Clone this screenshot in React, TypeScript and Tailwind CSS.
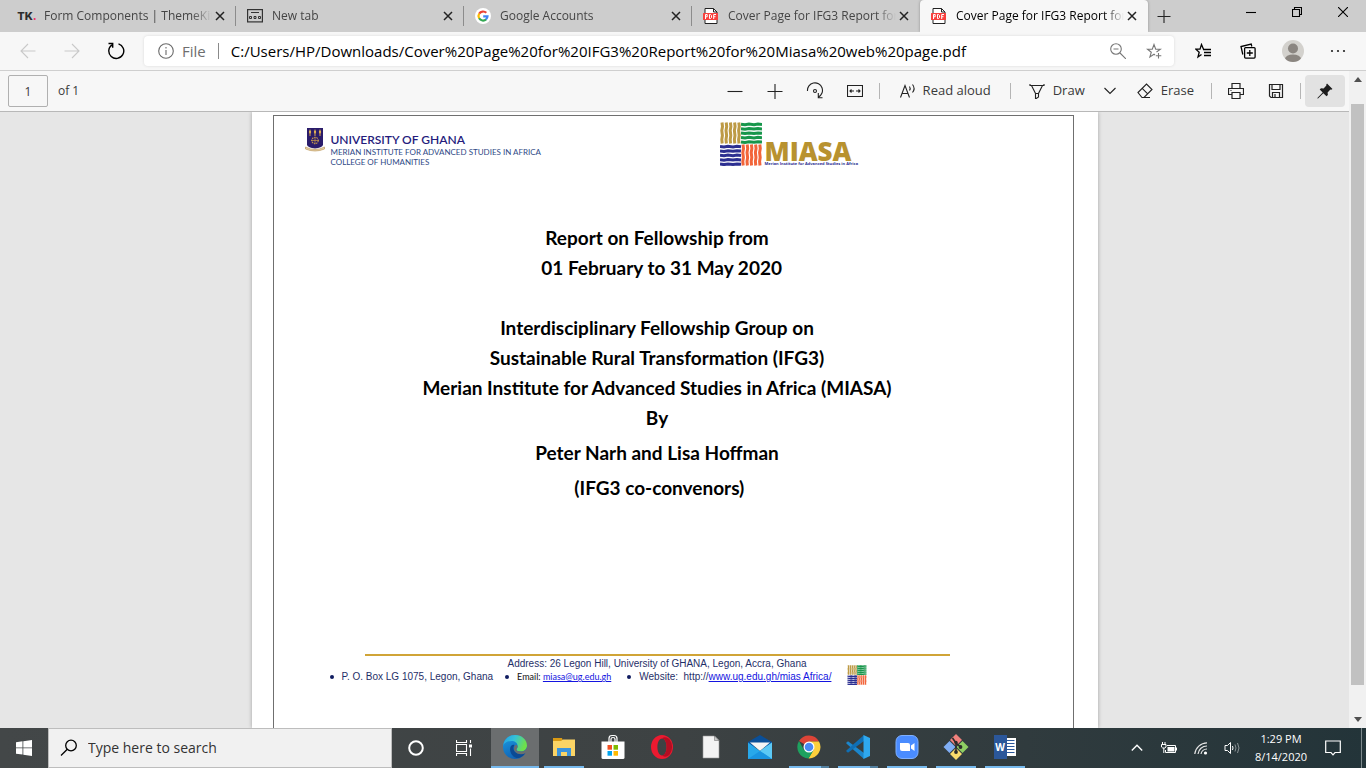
import type { ReactNode } from "react";

const UI = "font-['Open_Sans','Noto_Sans',sans-serif]";

function Stroke({ size = 16, className = "", children }: { size?: number; className?: string; children: ReactNode }) {
  return (
    <svg
      width={size}
      height={size}
      viewBox={`0 0 ${size} ${size}`}
      fill="none"
      stroke="currentColor"
      strokeWidth="1.1"
      className={`shrink-0 ${className}`}
      aria-hidden="true"
    >
      {children}
    </svg>
  );
}

/* ---------- tab strip ---------- */

function PdfIcon() {
  return (
    <svg width="16" height="16" viewBox="0 0 16 16" aria-hidden="true" className="shrink-0">
      <path d="M2 .5h8.500L14 4v11.500H2z" fill="#fff" stroke="#222" />
      <path d="M10.500.5V4H14" fill="none" stroke="#222" />
      <rect x="0" y="5" width="15" height="7" rx=".5" fill="#f8403d" />
      <g fill="none" stroke="#fff" strokeWidth="1">
        <path d="M2.500 11V6.500h1.700v2.300H2.500M6.500 6.500v4h1l1-1V7.500l-1-1zM10.700 11V6.500h2.300M10.700 8.700h1.800" />
      </g>
    </svg>
  );
}

function GoogleIcon() {
  return (
    <svg width="16" height="16" viewBox="0 0 16 16" aria-hidden="true" className="shrink-0">
      <circle cx="8" cy="8" r="8" fill="#fff" />
      <g fill="none" strokeWidth="2.2">
        <path d="M4.200 5.700A4.600 4.600 0 0 1 11.300 4.800" stroke="#ea4335" />
        <path d="M4.200 5.600a4.600 4.600 0 0 0 0 4.800" stroke="#fbbc05" />
        <path d="M4.100 10.300a4.600 4.600 0 0 0 7 1.100" stroke="#34a853" />
        <path d="M11 11.500a4.600 4.600 0 0 0 1.500-3.200H8.200" stroke="#4285f4" />
      </g>
    </svg>
  );
}

function TkIcon() {
  return (
    <span className="shrink-0 font-['Inter',sans-serif] text-[11px] font-extrabold text-[#2d2d2d]">
      TK<span className="text-[#f0346c]">.</span>
    </span>
  );
}

function NewTabIcon() {
  return (
    <svg width="16" height="14" viewBox="0 0 16 14" fill="none" stroke="#333" aria-hidden="true" className="shrink-0">
      <rect x=".6" y=".6" width="14.800" height="12.300" strokeWidth="1.200" />
      <path d="M4 3.500h8" />
      <path d="M2.500 7.500h2v2h-2zM7 7.500h2v2H7zM11.500 7.500h2v2h-2z" />
    </svg>
  );
}

type TabInfo = { title: string; icon: ReactNode; active?: boolean; divider?: boolean };

const tabs: TabInfo[] = [
  { title: "Form Components | ThemeKit", icon: <TkIcon />, divider: true },
  { title: "New tab", icon: <NewTabIcon />, divider: true },
  { title: "Google Accounts", icon: <GoogleIcon />, divider: true },
  { title: "Cover Page for IFG3 Report for", icon: <PdfIcon /> },
  { title: "Cover Page for IFG3 Report for", icon: <PdfIcon />, active: true },
];

function Tab({ tab }: { tab: TabInfo }) {
  return (
    <div
      className={`flex h-8 w-[228px] items-center pl-[11px] ${
        tab.active ? "rounded-t bg-[#f7f7f7] text-black shadow-[0_0_3px_rgba(0,0,0,0.3)]" : "text-[#454545]"
      }`}
    >
      <span className="flex w-4 shrink-0 justify-center">{tab.icon}</span>
      <span className="ml-[9px] w-[168px] overflow-hidden whitespace-nowrap text-xs [mask-image:linear-gradient(to_right,black_88%,transparent)]">
        {tab.title}
      </span>
      <button aria-label="Close tab" className="flex w-4 items-center justify-center">
        <Stroke size={10} className="text-[#222]">
          <path d="M1 1l8 8M9 1L1 9" strokeWidth="1.500" />
        </Stroke>
      </button>
      {tab.divider && <span className="ml-auto h-5 w-px bg-[#8c8c8c]" />}
    </div>
  );
}

function TabStrip() {
  return (
    <header className="flex h-8 shrink-0 items-start overflow-hidden bg-[#cdcdcd] pl-2">
      {tabs.map((t, i) => (
        <Tab key={i} tab={t} />
      ))}
      <button aria-label="New tab" className="flex h-8 w-8 items-center justify-center text-[#222]">
        <Stroke size={14}>
          <path d="M7 1v13M.5 7.500h13" />
        </Stroke>
      </button>
      <div className="ml-auto flex h-[23px] text-black">
        <button aria-label="Minimize" className="flex w-[46px] items-center justify-center">
          <Stroke size={10}>
            <path d="M0 5.500h10" />
          </Stroke>
        </button>
        <button aria-label="Restore" className="flex w-[46px] items-center justify-center">
          <Stroke size={10}>
            <path d="M.5 2.500h7v7h-7zM2.500 2.500v-2h7v7h-2" />
          </Stroke>
        </button>
        <button aria-label="Close" className="flex w-[46px] items-center justify-center">
          <Stroke size={10}>
            <path d="M0 0l10 10M10 0L0 10" />
          </Stroke>
        </button>
      </div>
    </header>
  );
}

/* ---------- address bar ---------- */

function AddressBar() {
  return (
    <div className="flex h-[39px] shrink-0 items-center border-b border-[#cfcfcf] bg-[#f7f7f7] pr-1.5 pl-1.5">
      <button aria-label="Back" className="flex w-11 justify-center text-[#c9c9c9]">
        <Stroke size={16}>
          <path d="M15.500 8H1M8 1L1 8l7 7" />
        </Stroke>
      </button>
      <button aria-label="Forward" className="flex w-11 justify-center text-[#c9c9c9]">
        <Stroke size={16}>
          <path d="M.5 8H15M8 1l7 7-7 7" />
        </Stroke>
      </button>
      <button aria-label="Refresh" className="flex w-11 justify-center text-black">
        <Stroke size={18}>
          <path d="M11.500 1.800A7.500 7.500 0 1 1 5 2.800M1.500 1.500h4.200v4.200" strokeWidth="1.400" />
        </Stroke>
      </button>
      <div className="mx-1.5 flex h-[30px] flex-1 items-center rounded bg-white pr-3 pl-[14px] shadow-[0_0_3px_rgba(0,0,0,0.12)]">
        <Stroke size={16} className="text-[#6a6a6a]">
          <circle cx="8" cy="8" r="7.300" />
          <path d="M8 7v5M8 4v1.500" />
        </Stroke>
        <span className="ml-2 text-[15px] text-[#6e6e6e]">File</span>
        <span className="mx-3 h-4 w-px bg-[#8a8a8a]" />
        <input
          aria-label="Address"
          className="min-w-0 flex-1 bg-transparent text-[15px] text-black outline-none"
          defaultValue="C:/Users/HP/Downloads/Cover%20Page%20for%20IFG3%20Report%20for%20Miasa%20web%20page.pdf"
        />
        <button aria-label="Zoom" className="flex text-[#777]">
          <Stroke size={16}>
            <circle cx="6" cy="6" r="5.300" />
            <path d="M10 10l6 6M3.500 6h5" />
          </Stroke>
        </button>
        <button aria-label="Add to favorites" className="ml-5 flex text-[#777]">
          <Stroke size={16}>
            <path d="M10.500 9l4-2.800H9.700L8 1.500 6.300 6.200H1.500l3.800 3-1.400 4.800L8 11.200l1 .8M12.500 10v5.500M9.800 12.700h5.500" />
          </Stroke>
        </button>
      </div>
      <button aria-label="Favorites" className="flex w-[45px] justify-center text-black">
        <Stroke size={16}>
          <path d="M8.500 6.200L6.500 1.500 5 6.200H.8l3.400 3-1.200 4.800 3.500-2.600" strokeWidth="1.300" />
          <path d="M8 6.500h8M9 9.500h7M9 12.500h7" strokeWidth="1.300" />
        </Stroke>
      </button>
      <button aria-label="Collections" className="flex w-[45px] justify-center text-black">
        <Stroke size={16}>
          <rect x="4.600" y="4.600" width="10.500" height="10.500" rx="1" strokeWidth="1.300" />
          <path d="M9.800 7v6M6.800 10h6M2.800 11.500L1 3.500 11.200 1l.6 2.500" strokeWidth="1.300" />
        </Stroke>
      </button>
      <button aria-label="Profile" className="flex w-[45px] justify-center">
        <svg width="22" height="22" viewBox="0 0 22 22" aria-hidden="true">
          <clipPath id="avatar">
            <circle cx="11" cy="11" r="11" />
          </clipPath>
          <g clipPath="url(#avatar)">
            <rect width="22" height="22" fill="#d3d1cd" />
            <circle cx="11" cy="8.500" r="5" fill="#8b8681" />
            <ellipse cx="11" cy="19" rx="8" ry="4.500" fill="#8b8681" />
          </g>
        </svg>
      </button>
      <button aria-label="Settings and more" className="flex w-[45px] justify-center text-[#222]">
        <svg width="16" height="16" viewBox="0 0 16 16" fill="currentColor" aria-hidden="true">
          <circle cx="2" cy="8" r="1.100" />
          <circle cx="8" cy="8" r="1.100" />
          <circle cx="14" cy="8" r="1.100" />
        </svg>
      </button>
    </div>
  );
}

/* ---------- PDF toolbar ---------- */

function Divider() {
  return <span className="h-4 w-px bg-[#b5b5b5]" />;
}

function PdfToolbar() {
  const icon = "flex h-8 w-10 items-center justify-center";
  return (
    <div className="flex h-[41px] shrink-0 items-center border-b border-[#b8b8b8] bg-[#f7f7f7] pr-1 pl-2 text-[13px] text-[#3a3a3a]">
      <input
        aria-label="Page number"
        defaultValue="1"
        className="h-8 w-10 rounded-xs border border-[#b0b0b0] bg-[#f7f7f7] text-center text-xs outline-none"
      />
      <span className="ml-[10px] text-xs">of 1</span>
      <div className="ml-auto flex items-center text-[#222]">
        <button aria-label="Zoom out" className={icon}>
          <Stroke size={16}>
            <path d="M.5 8.500h15" />
          </Stroke>
        </button>
        <button aria-label="Zoom in" className={icon}>
          <Stroke size={16}>
            <path d="M.5 8.500h15M8 1v15" />
          </Stroke>
        </button>
        <button aria-label="Rotate" className={icon}>
          <Stroke size={18}>
            <path d="M1.500 9a7.500 7.500 0 1 1 11 6M12.300 11v4.800h4.200" />
            <circle cx="9" cy="9" r="1.500" />
          </Stroke>
        </button>
        <button aria-label="Fit to width" className={icon}>
          <Stroke size={16}>
            <path d="M.5 2.500h15v11H.5zM3 8h4M9 8h4M4.500 6.500L3 8l1.500 1.500M11.500 6.500L13 8l-1.500 1.500" />
          </Stroke>
        </button>
      </div>
      <span className="ml-1 flex">
        <Divider />
      </span>
      <button className="flex w-[130px] items-center justify-center gap-1.5">
        <Stroke size={18} className="text-[#222]">
          <path d="M1.500 15.500L6 3.500l4.500 12M3 11.500h6M10.500 4.500c1 1.500 1 2.500 0 4M13.500 2.500c2 2.500 2 5.500 0 8" />
        </Stroke>
        Read aloud
      </button>
      <Divider />
      <button className="ml-[18px] flex items-center gap-2">
        <Stroke size={16} className="text-[#222]">
          <path d="M1 1v1.500h14V1M2.500 2.500l4 8v5.500l3-2v-3.500l4-8M6.500 10.500h3" />
        </Stroke>
        Draw
      </button>
      <button aria-label="Draw options" className="ml-[18px] flex text-[#222]">
        <Stroke size={14}>
          <path d="M1.500 4L7 9.500 12.500 4" />
        </Stroke>
      </button>
      <button className="ml-5 flex items-center gap-2">
        <Stroke size={16} className="text-[#222]">
          <path d="M1 9.500L9.500 1l5.500 5.500-8 8H5zM5.200 5.300l5.500 5.500M7 14.500h6" />
        </Stroke>
        Erase
      </button>
      <span className="ml-[17px] mr-1 flex">
        <Divider />
      </span>
      <button aria-label="Print" className={`${icon} text-[#222]`}>
        <Stroke size={16}>
          <path d="M4 5.500v-5h8v5M4 11.500H.5v-6h15v6H12M4 9.500h8v6H4zM2.500 7.500h1" strokeWidth="1.200" />
        </Stroke>
      </button>
      <button aria-label="Save" className={`${icon} text-[#222]`}>
        <Stroke size={16}>
          <path d="M1.500 1.500h13v13H3l-1.500-1.500zM4 1.500v5h8v-5M4.500 14.500v-5h7v5M7 11v3" strokeWidth="1.200" />
        </Stroke>
      </button>
      <span className="mx-1 flex">
        <Divider />
      </span>
      <button aria-label="Pin toolbar" className="flex h-8 w-10 items-center justify-center rounded-sm bg-[#e2e2e2]">
        <svg width="16" height="16" viewBox="0 0 16 16" fill="#1c1c1c" aria-hidden="true">
          <path d="M10 .5L15.500 6l-1.300.8-.8-.2-2.800 2.800.3 2.600-1.400 1.300L6.300 10.200 1 15.500l-.6-.1.200-.7L5.700 9.600 2.700 6.500 4 5.200l2.600.2 2.800-2.800-.2-.8z" />
        </svg>
      </button>
    </div>
  );
}

/* ---------- document ---------- */

function WovenLogo({ className }: { className: string }) {
  const lanes = [0, 1, 2, 3, 4];
  const down = (x: number, y: number) => `M${x} ${y}l.5 4-.7 4 .6 5-.6 4 .4 4`;
  const across = (x: number, y: number) => `M${x} ${y}l4 .5 4-.7 5 .6 4-.6 4 .4`;
  return (
    <svg viewBox="0 0 42 44" className={`shrink-0 ${className}`} fill="none" strokeWidth="3" aria-hidden="true">
      {lanes.map((n) => (
        <g key={n}>
          <path d={down(2 + n * 4.2, 0.5)} stroke="#bd9a45" />
          <path d={across(21, 2.3 + n * 4.4)} stroke="#17964b" />
          <path d={across(0, 24.5 + n * 4.4)} stroke="#2c2f91" />
          <path d={down(23 + n * 4.2, 22.5)} stroke="#f2653a" />
        </g>
      ))}
    </svg>
  );
}

function Crest() {
  return (
    <svg width="20" height="24" viewBox="0 0 20 24" aria-hidden="true" className="shrink-0">
      <path d="M2 0h16v17q-1 2.500-8 3.500-7-1-8-3.500z" fill="#2a1c6b" />
      <g stroke="#c99a4d" strokeWidth="1.100" fill="none">
        <path d="M5 3v5M10 3v5M15 3v5" />
        <circle cx="10" cy="12.500" r="3.200" strokeDasharray="1.500 .8" />
        <path d="M6 12.500h8M10 9v7" strokeWidth=".7" />
      </g>
      <g fill="#e4b455">
        <path d="M5 1l1.200 3L5 6 3.800 4zM10 1l1.200 3L10 6 8.800 4zM15 1l1.200 3L15 6l-1.200-2z" />
      </g>
      <path d="M.5 19q9.500 5 19 0v2q-9.500 4-19 0z" fill="#e6d3ac" stroke="#b78d4a" strokeWidth=".6" />
    </svg>
  );
}

function Bullet() {
  return <span className="size-1 rounded-full bg-[#101c60]" />;
}

function DocumentPage() {
  return (
    <main className="min-h-0 flex-1 overflow-hidden bg-[#e6e6e6]">
      <article className="mx-auto flex h-full w-[846px] flex-col bg-white pt-[3px] pr-6 pl-[21px] shadow-[0_0_4px_rgba(0,0,0,0.3)]">
        <div className="flex-1 border border-b-0 border-[#6f6f6f] pr-8">
          <div className="flex items-start pt-1.5 pl-[31px]">
            <div className="mt-1.5">
              <Crest />
            </div>
            <div className="mt-2.5 ml-1.5 w-[389px] font-['Lato',sans-serif]">
              <p className="text-xs leading-[15px] font-semibold text-[#251b7c]">UNIVERSITY OF GHANA</p>
              <p className="text-[8px] leading-[10px] text-[#2f4a86]">MERIAN INSTITUTE FOR ADVANCED STUDIES IN AFRICA</p>
              <p className="text-[8px] leading-[10px] text-[#2f4a86]">COLLEGE OF HUMANITIES</p>
            </div>
            <WovenLogo className="h-11 w-[42px]" />
            <div className="mt-[18px] ml-[3px] whitespace-nowrap">
              <p className="font-['Open_Sans',sans-serif] text-[26px] leading-[22px] font-extrabold text-[#b8922f]">MIASA</p>
              <p className="font-['Open_Sans',sans-serif] text-[4px] leading-[4px] font-bold text-[#2c2f91]">
                Merian Institute for Advanced Studies in Africa
              </p>
            </div>
          </div>

          <div className="mt-14 text-center font-['Lato',sans-serif] text-[19px] leading-[30px] font-bold whitespace-pre text-black">
            <p>Report on Fellowship from</p>
            <p>{"  01 February to 31 May 2020"}</p>
            <p className="mt-[30px]">Interdisciplinary Fellowship Group on</p>
            <p>Sustainable Rural Transformation (IFG3)</p>
            <p>Merian Institute for Advanced Studies in Africa (MIASA)</p>
            <p>By</p>
            <p className="mt-[5px]">Peter Narh and Lisa Hoffman</p>
            <p className="mt-[5px]">{" (IFG3 co-convenors)"}</p>
          </div>

          <footer className="mt-[151px] font-['Liberation_Sans',sans-serif] text-[10px] leading-[13px] text-[#1f2f68]">
            <div className="mx-auto w-[585px] border-t-2 border-[#d0a437]" />
            <p className="mt-px text-center">Address: 26 Legon Hill, University of GHANA, Legon, Accra, Ghana</p>
            <div className="flex items-center pl-14 whitespace-pre">
              <Bullet />
              <span className="ml-2">P. O. Box LG 1075, Legon, Ghana</span>
              <span className="ml-3 flex">
                <Bullet />
              </span>
              <span className="ml-2 font-['Lato',sans-serif] text-[9px] text-[#111]">
                Email:{" "}
                <a href="mailto:miasa@ug.edu.gh" className="text-[#1414e0] underline">
                  miasa@ug.edu.gh
                </a>
              </span>
              <span className="ml-4 flex">
                <Bullet />
              </span>
              <span className="ml-2">
                {"Website:  http://"}
                <a href="http://www.ug.edu.gh/mias" className="text-[#1414e0] underline">
                  www.ug.edu.gh/mias Africa/
                </a>
              </span>
              <span className="-mt-3 -mb-2 ml-4 flex">
                <WovenLogo className="h-5 w-5" />
              </span>
            </div>
          </footer>
        </div>
      </article>
    </main>
  );
}

function ScrollBar() {
  return (
    <div className="flex w-[17px] shrink-0 flex-col items-center bg-[#f1f1f1] pb-[6px] pt-[6px]">
      <svg width="8" height="5" viewBox="0 0 8 5" fill="#505050" aria-hidden="true">
        <path d="M4 0l4 5H0z" />
      </svg>
      <div className="mt-[22px] w-[13px] flex-1 bg-[#c1c1c1]" />
      <svg width="8" height="5" viewBox="0 0 8 5" fill="#505050" aria-hidden="true" className="mt-8">
        <path d="M4 5l4-5H0z" />
      </svg>
    </div>
  );
}

/* ---------- taskbar ---------- */

function EdgeLogo() {
  return (
    <svg width="24" height="26" viewBox="0 0 24 24" aria-hidden="true">
      <defs>
        <linearGradient id="edgeTop" x1="0" y1="0" x2="1" y2=".3">
          <stop offset="0" stopColor="#1f9fe8" />
          <stop offset=".5" stopColor="#35c1d8" />
          <stop offset="1" stopColor="#6ee04a" />
        </linearGradient>
        <linearGradient id="edgeSide" x1="0" y1="0" x2=".4" y2="1">
          <stop offset="0" stopColor="#1b9de2" />
          <stop offset="1" stopColor="#1063b5" />
        </linearGradient>
      </defs>
      <circle cx="12" cy="12" r="12" fill="url(#edgeSide)" />
      <path d="M0 11C1 4 6 0 12 0c7 0 12 5 12 10.500 0 3.500-2.500 6-6 6-3 0-4.600-1-4.600-2 0-.8 1.200-1.200 1.200-3.500 0-3-2.600-5-6-5C4.500 6 1 8 0 11z" fill="url(#edgeTop)" />
      <path d="M8.500 10.500C6 13 7 18 10 21c1.500 1.700 4 2.400 6 2 3-1 5-3 6.300-5.300-4 2.300-9.600 1-11.300-2.200-1-2-.5-4 .5-5.500-1-.3-2.200-.2-3 .5z" fill="#0b4a94" />
      <path d="M14.600 11c0 2.300-1.200 2.700-1.200 3.500 0 1 1.600 2 4.600 2 3 0 5-1.500 6-4v4c-.8.800-1.200 1.200-1.700 1.800-4 2-9 .7-10.700-2.300-1.200-2.400-.6-4.600.9-6 1 0 2.100.5 2.100 1z" fill="#6b6e6f" />
    </svg>
  );
}

function FolderLogo() {
  return (
    <svg width="24" height="24" viewBox="0 0 24 24" aria-hidden="true">
      <path d="M1 3h9l1 3H1z" fill="#d99a14" />
      <path d="M1 6h8l2-1.500h12V21H1z" fill="#fbd465" />
      <path d="M5 21v-8h14v8h-4v-4H9v4z" fill="#3c94dc" />
    </svg>
  );
}

function StoreLogo() {
  return (
    <svg width="24" height="26" viewBox="0 0 24 26" aria-hidden="true">
      <path d="M8 8V4.500Q8 1.500 11 1.500h2q3 0 3 3V8M10 8V5q0-1.500 2-1.500T14 5v3" fill="none" stroke="#fff" strokeWidth="1.200" />
      <path d="M.5 7.500h23v16q0 1.500-1.500 1.500H2q-1.500 0-1.500-1.500z" fill="#fff" />
      <path d="M6.500 11H11v4.700H6.500z" fill="#f25022" />
      <path d="M12.500 11H17v4.700h-4.500z" fill="#7fba00" />
      <path d="M6.500 17H11v4.700H6.500z" fill="#00a4ef" />
      <path d="M12.500 17H17v4.700h-4.500z" fill="#ffb900" />
    </svg>
  );
}

function OperaLogo() {
  return (
    <svg width="24" height="26" viewBox="0 0 24 26" aria-hidden="true">
      <path
        d="M12 1a11 12 0 1 0 0 24a11 12 0 1 0 0-24zM12 4.500c2.700 0 4.600 3.700 4.600 8.500s-1.900 8.500-4.600 8.500-4.600-3.700-4.600-8.500S9.300 4.500 12 4.500z"
        fill="#ec1a30"
        fillRule="evenodd"
      />
      <path d="M12 4.500q3-2.500 7.300.5A11 12 0 0 1 19.300 21q-4.300 3-7.300.5c2.700 0 4.600-3.700 4.600-8.500S14.700 4.500 12 4.500z" fill="#b30e22" />
    </svg>
  );
}

function FileLogo() {
  return (
    <svg width="18" height="24" viewBox="0 0 18 24" aria-hidden="true">
      <path d="M1 1h11.500L17 5.500V23H1z" fill="#f3f3f3" stroke="#999" strokeWidth=".6" />
      <path d="M12.500 1v4.500H17z" fill="#c9c9c9" stroke="#777" strokeWidth=".6" />
    </svg>
  );
}

function MailLogo() {
  return (
    <svg width="24" height="26" viewBox="0 0 24 26" aria-hidden="true">
      <path d="M0 8L12 1l12 7v5H0z" fill="#0a4f98" />
      <path d="M2 8.500h20L12 17z" fill="#f5f5f5" />
      <path d="M0 8.500l12 8.500L24 8.500V25H0z" fill="#28a8ea" />
      <path d="M24 8.500V25L12 17z" fill="#5cc9f5" />
      <path d="M0 25l12-8 12 8z" fill="#1a94e0" />
    </svg>
  );
}

function ChromeLogo() {
  return (
    <svg width="24" height="24" viewBox="0 0 24 24" aria-hidden="true">
      <path d="M12 12L2 6A11.500 11.500 0 0 1 22 6.500H12z" fill="#dc4437" />
      <path d="M12 6.500h10A11.500 11.500 0 0 1 11.500 23.500L17 14z" fill="#fdd03c" />
      <path d="M2 6A11.500 11.500 0 0 0 11.500 23.500L16 16l-9-1z" fill="#1ea15f" />
      <circle cx="12" cy="12" r="5.500" fill="#fff" />
      <circle cx="12" cy="12" r="4.300" fill="#4a8af4" />
    </svg>
  );
}

function CodeLogo() {
  return (
    <svg width="24" height="26" viewBox="0 0 24 26" aria-hidden="true">
      <path d="M0 9l2-1.700L18 19v6L1.500 10.500z" fill="#1b86cc" />
      <path d="M0 17l2 1.700L18 7V1L1.500 15.500z" fill="#0f6fb5" />
      <path d="M17.500 1L24 4v18l-6.500 3z" fill="#2fa8ee" />
    </svg>
  );
}

function ZoomLogo() {
  return (
    <svg width="24" height="26" viewBox="0 0 24 26" aria-hidden="true">
      <rect x="1" y="1.500" width="22" height="23" rx="6" fill="#4a8cff" stroke="#7fb0ff" />
      <path d="M5 9h8q2 0 2 2v6H7q-2 0-2-2z" fill="#fff" />
      <path d="M16 11.500l3.500-2.500v8L16 14.500z" fill="#fff" />
    </svg>
  );
}

function GitLogo() {
  return (
    <svg width="26" height="26" viewBox="0 0 26 26" aria-hidden="true">
      <path d="M13 0l6 6-6 6-6-6z" fill="#f2817d" />
      <path d="M6.500 7l6 6-6 6-6-6z" fill="#80aef5" />
      <path d="M19.500 7l6 6-6 6-6-6z" fill="#8fce63" />
      <path d="M13 14l6 6-6 6-6-6z" fill="#fadc6c" />
      <path d="M9.500 4l3.500 5v9M13 9l4.500 4" stroke="#2b2b2b" strokeWidth="1.600" fill="none" />
      <g fill="#2b2b2b">
        <circle cx="13" cy="8.500" r="1.700" />
        <circle cx="17.500" cy="13" r="1.900" />
        <circle cx="13" cy="18" r="1.900" />
      </g>
    </svg>
  );
}

function WordLogo() {
  return (
    <span className="flex items-center">
      <span className="flex h-6 w-[13px] items-center justify-center bg-[#2b579a] text-[10px] font-bold text-white">W</span>
      <svg width="9" height="20" viewBox="0 0 9 20" aria-hidden="true">
        <path d="M0 1h9v18H0z" fill="#fff" />
        <path d="M0 3.500h7.500M0 6.500h7.500M0 9.500h7.500M0 12.500h7.500M0 15.500h7.500" stroke="#2b579a" strokeWidth="1.200" />
      </svg>
    </span>
  );
}

type App = { name: string; logo: ReactNode; open?: boolean; stacked?: boolean };

const apps: App[] = [
  { name: "File Explorer", logo: <FolderLogo />, open: true },
  { name: "Microsoft Store", logo: <StoreLogo /> },
  { name: "Opera", logo: <OperaLogo /> },
  { name: "Document", logo: <FileLogo /> },
  { name: "Mail", logo: <MailLogo /> },
  { name: "Chrome", logo: <ChromeLogo />, open: true, stacked: true },
  { name: "Visual Studio Code", logo: <CodeLogo />, open: true, stacked: true },
  { name: "Zoom", logo: <ZoomLogo />, open: true },
  { name: "Git", logo: <GitLogo />, open: true },
  { name: "Word", logo: <WordLogo />, open: true },
];

function Taskbar() {
  return (
    <nav className="flex h-10 shrink-0 bg-linear-to-r from-[#434748] via-[#3d4243] to-[#233439] text-white">
      <button aria-label="Start" className="flex w-12 items-center justify-center">
        <svg width="16" height="16" viewBox="0 0 16 16" fill="#fff" aria-hidden="true">
          <path d="M0 2.200L6.500 1.300v6.200H0zM7.300 1.200L16 0v7.500H7.300zM0 8.300h6.500v6.300L0 13.700zM7.300 8.300H16V16l-8.700-1.200z" />
        </svg>
      </button>
      <label className="flex w-[344px] items-center border border-[#bdbdbd] bg-[#f1f1f1] pl-[11px]">
        <Stroke size={18} className="text-black">
          <circle cx="11" cy="6.500" r="5.300" strokeWidth="1.300" />
          <path d="M7.300 10.300L1 16.500" strokeWidth="1.300" />
        </Stroke>
        <input
          aria-label="Search"
          placeholder="Type here to search"
          className="ml-2.5 min-w-0 flex-1 bg-transparent text-sm text-black outline-none placeholder:text-[#333]"
        />
      </label>
      <button aria-label="Cortana" className="flex w-12 items-center justify-center">
        <svg width="16" height="16" viewBox="0 0 16 16" fill="none" stroke="#fff" strokeWidth="2" aria-hidden="true">
          <circle cx="8" cy="8" r="6.800" />
        </svg>
      </button>
      <button aria-label="Task view" className="flex w-12 items-center justify-center">
        <Stroke size={16}>
          <path d="M.5 0v2.500h10V0M.5 16v-2.500h10V16M.5 4.500h10v7H.5zM14.500 0v3M14.500 8.500V16" />
          <path d="M13 4.500h3v3h-3z" fill="#fff" stroke="none" />
        </Stroke>
      </button>
      <button
        aria-label="Microsoft Edge"
        className="ml-[3px] flex w-12 items-center justify-center border-b-2 border-[#76b9ed] bg-[#6b6e6f]"
      >
        <EdgeLogo />
      </button>
      {apps.map((a) => (
        <button key={a.name} aria-label={a.name} className="flex w-[49px] flex-col items-center">
          <span className="flex h-[38px] items-center">{a.logo}</span>
          {a.open && (
            <span className="flex h-0.5 w-10">
              <span className="flex-1 bg-[#76b9ed]" />
              {a.stacked && <span className="w-2 bg-[#53809f]" />}
            </span>
          )}
        </button>
      ))}
      <div className="ml-auto flex items-center">
        <button aria-label="Show hidden icons" className="flex w-8 justify-center">
          <Stroke size={12}>
            <path d="M.8 8.500L6 3.300l5.200 5.200" strokeWidth="1.400" />
          </Stroke>
        </button>
        <button aria-label="Battery" className="flex w-8 justify-center">
          <svg width="16" height="12" viewBox="0 0 16 12" fill="none" stroke="#fff" aria-hidden="true">
            <path d="M6 3.500h8.500v7h-10V8M15.500 5.500v3" />
            <path d="M6.500 5h7v4.500h-7z" fill="#fff" stroke="none" />
            <path d="M1.500 0v2.500M4 0v2.500M.5 2.500h4.500V5L3.800 6H1.700L.5 5zM2.800 6v5" />
          </svg>
        </button>
        <button aria-label="Network" className="flex w-8 justify-center">
          <svg width="14" height="14" viewBox="0 0 14 14" fill="none" stroke="#e6e6e6" aria-hidden="true">
            <path d="M.8 13A12.500 12.500 0 0 1 13 1.800M4 13a9 9 0 0 1 9-8M7 13a6 6 0 0 1 6-5" strokeWidth="1.200" />
            <circle cx="11.500" cy="12" r="1.600" fill="#fff" stroke="none" />
          </svg>
        </button>
        <button aria-label="Volume" className="flex w-8 justify-center">
          <svg width="18" height="14" viewBox="0 0 18 14" fill="none" stroke="#fff" aria-hidden="true">
            <path d="M1 4.500h2.500l3-3v11l-3-3H1z" />
            <path d="M8.500 5q1 2 0 4" />
            <path d="M11 3.500q2 3.500 0 7M13.500 2q3 5 0 10" stroke="#8a9295" />
          </svg>
        </button>
        <div className="w-16 text-center text-[11px] leading-[18px]">
          <p>1:29 PM</p>
          <p>8/14/2020</p>
        </div>
        <button aria-label="Notifications" className="flex w-10 justify-center">
          <Stroke size={16}>
            <path d="M.7 1h14.600v11.500H10L8 14.800 6 12.500H.7z" strokeWidth="1.200" />
          </Stroke>
        </button>
        <span className="mr-1 ml-2 h-10 w-px bg-[#7d898c]" />
      </div>
    </nav>
  );
}

export default function App() {
  return (
    <div className={`flex h-screen flex-col overflow-hidden ${UI}`}>
      <TabStrip />
      <AddressBar />
      <div className="flex min-h-0 flex-1">
        <div className="flex min-w-0 flex-1 flex-col">
          <PdfToolbar />
          <DocumentPage />
        </div>
        <ScrollBar />
      </div>
      <Taskbar />
    </div>
  );
}
